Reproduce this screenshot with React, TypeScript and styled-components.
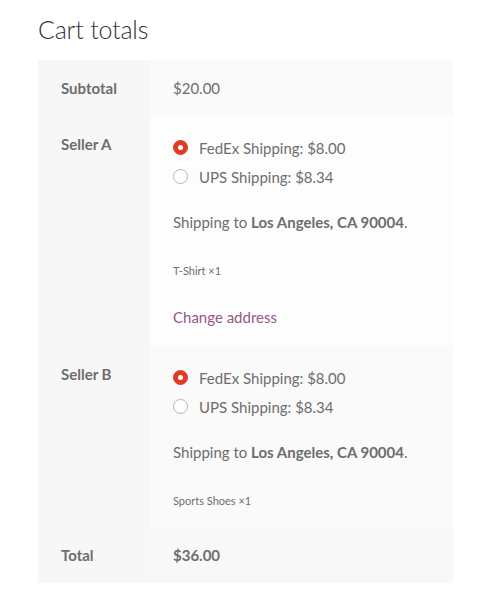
import React from "react";
import styled, { createGlobalStyle } from "styled-components";

const Global = createGlobalStyle`
  html, body { margin: 0; padding: 0; background: #ffffff; }
  body { font-family: Lato, "Liberation Sans", sans-serif; color: #6d6d6d; }
`;

const Page = styled.div`
  padding: 0 30px 0 38px;
`;

const Title = styled.h2`
  margin: 0;
  padding-top: 13px;
  height: 60px;
  box-sizing: border-box;
  font-size: 25px;
  line-height: 32px;
  font-weight: 300;
  color: #333333;
  letter-spacing: -0.2px;
`;

const Table = styled.table`
  width: 415px;
  border-collapse: collapse;
  border-spacing: 0;
`;

const Row = styled.tr<{ $bg: string }>`
  td { background: ${(p) => p.$bg}; }
`;

const Th = styled.th`
  width: 112px;
  box-sizing: border-box;
  background: #f7f7f7;
  padding: 16px 0 16px 23px;
  text-align: left;
  vertical-align: top;
  font-size: 15px;
  line-height: 24px;
  font-weight: 700;
  color: #6d6d6d;
`;

const Td = styled.td`
  padding: 16px 22px 16px 23px;
  vertical-align: top;
  font-size: 15px;
  line-height: 24px;
  color: #6d6d6d;
`;

const ShippingBlock = styled.div`
  padding-top: 1px;
  padding-bottom: 1px;
`;

const Amount = styled.span<{ $bold?: boolean }>`
  font-weight: ${(p) => (p.$bold ? 700 : 400)};
`;

const Methods = styled.ul`
  list-style: none;
  margin: 0;
  padding: 0;
`;

const Method = styled.li`
  display: flex;
  align-items: center;
  gap: 11px;
  height: 29px;
`;

const Radio = styled.span<{ $checked?: boolean }>`
  width: 15px;
  height: 15px;
  box-sizing: border-box;
  border-radius: 50%;
  flex: none;
  display: flex;
  align-items: center;
  justify-content: center;
  background: ${(p) => (p.$checked ? "#df3b25" : "#ffffff")};
  border: 1px solid ${(p) => (p.$checked ? "#df3b25" : "#b5b5b5")};
  &::after {
    content: "";
    display: ${(p) => (p.$checked ? "block" : "none")};
    width: 5px;
    height: 5px;
    border-radius: 50%;
    background: #ffffff;
  }
`;

const Destination = styled.p`
  margin: 19px 0 0;
  strong { font-weight: 700; }
`;

const Contents = styled.p`
  margin: 28px 0 0;
  font-size: 11px;
  line-height: 18px;
`;

const ChangeLink = styled.a`
  display: block;
  margin-top: 25px;
  color: #96588a;
  text-decoration: none;
  font-size: 15px;
  line-height: 24px;
  cursor: pointer;
`;

type Seller = { name: string; item: string; change?: boolean };

const sellers: Seller[] = [
  { name: "Seller A", item: "T-Shirt ×1", change: true },
  { name: "Seller B", item: "Sports Shoes ×1" },
];

const rowBgs = ["#fdfdfd", "#fafafa"];

export default function App() {
  return (
    <>
      <Global />
      <Page>
        <Title>Cart totals</Title>
        <Table>
          <tbody>
            <Row $bg="#fafafa">
              <Th>Subtotal</Th>
              <Td>
                <Amount>$20.00</Amount>
              </Td>
            </Row>
            {sellers.map((s, i) => (
              <Row key={s.name} $bg={rowBgs[i]}>
                <Th>{s.name}</Th>
                <Td>
                  <ShippingBlock>
                    <Methods>
                      <Method>
                        <Radio $checked />
                        <span>FedEx Shipping: $8.00</span>
                      </Method>
                      <Method>
                        <Radio />
                        <span>UPS Shipping: $8.34</span>
                      </Method>
                    </Methods>
                    <Destination>
                      Shipping to <strong>Los Angeles, CA 90004</strong>.
                    </Destination>
                    <Contents>{s.item}</Contents>
                    {s.change && <ChangeLink>Change address</ChangeLink>}
                  </ShippingBlock>
                </Td>
              </Row>
            ))}
            <Row $bg="#f8f8f8">
              <Th>Total</Th>
              <Td>
                <Amount $bold>$36.00</Amount>
              </Td>
            </Row>
          </tbody>
        </Table>
      </Page>
    </>
  );
}
